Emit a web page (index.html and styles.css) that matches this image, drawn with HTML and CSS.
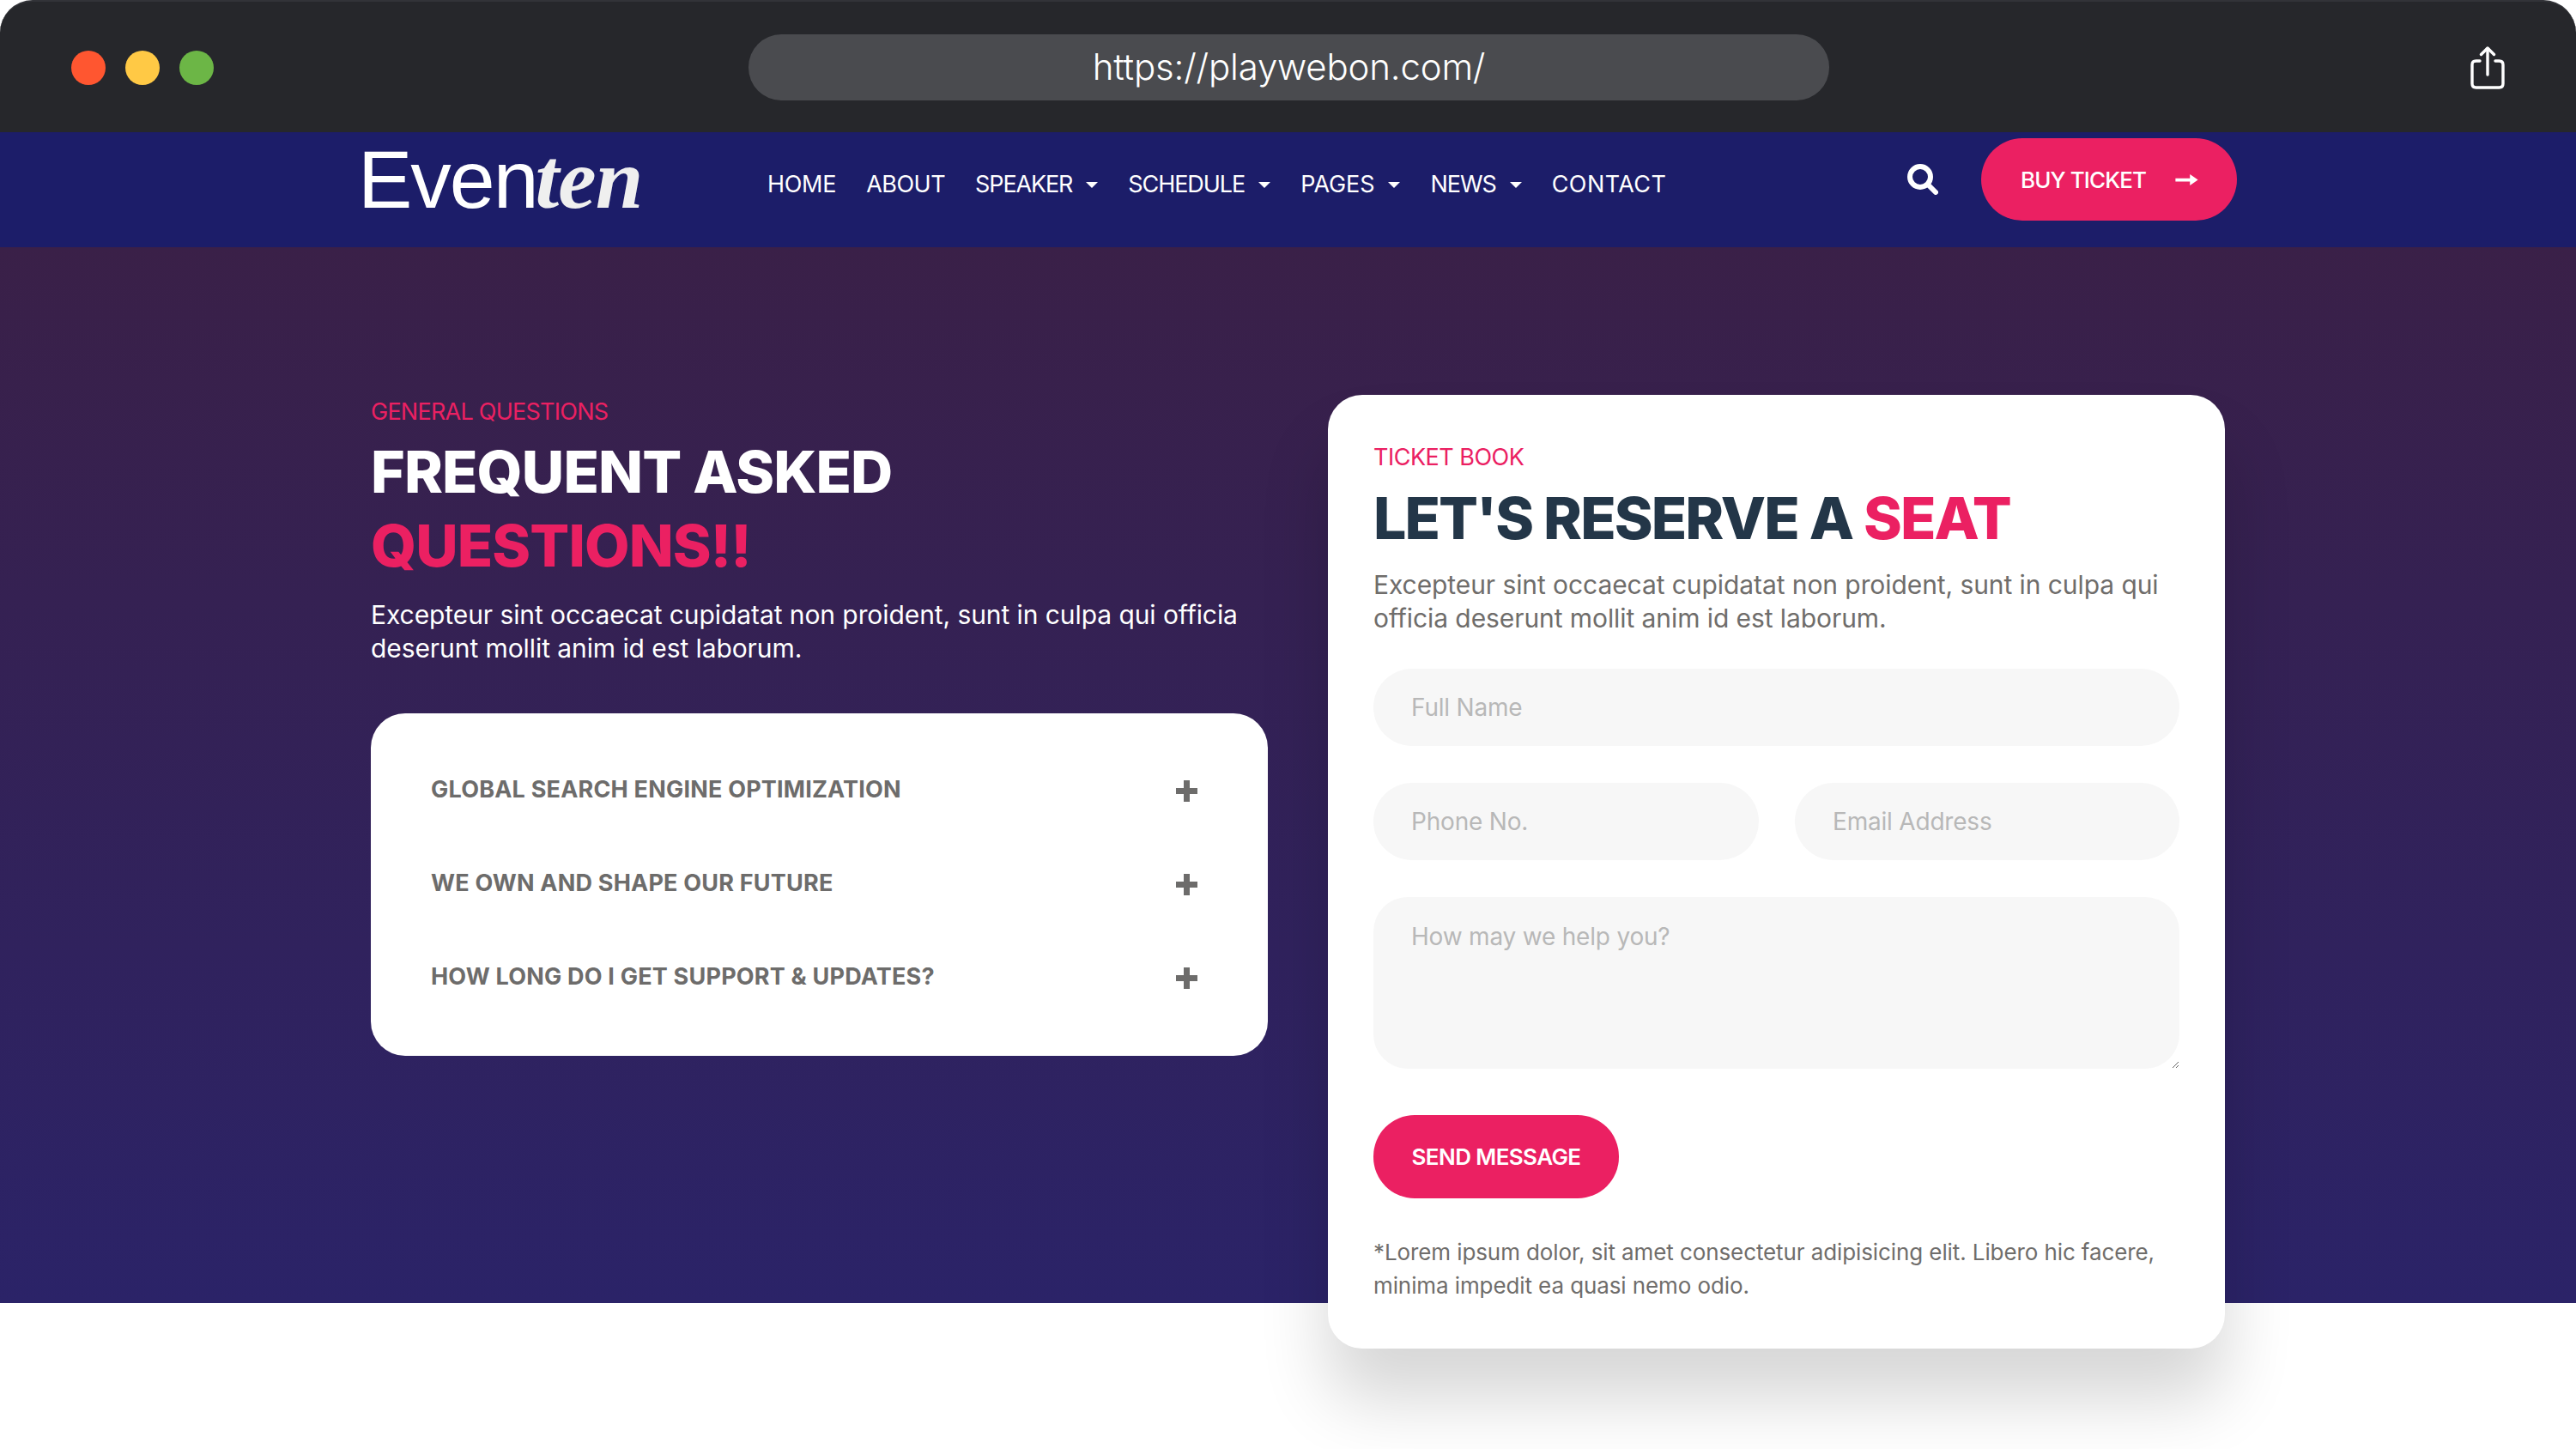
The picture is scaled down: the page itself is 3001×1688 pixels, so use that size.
FILE: index.html
```html
<!DOCTYPE html>
<html lang="en">
<head>
<meta charset="utf-8">
<title>Eventen</title>
<link rel="stylesheet" href="styles.css">
</head>
<body>
<header class="chrome">
  <div class="lights"><span class="light red"></span><span class="light yellow"></span><span class="light green"></span></div>
  <div class="url">https://playwebon.com/</div>
  <svg class="share" viewBox="0 0 40 50" fill="none" stroke="#fff" stroke-width="3.4" stroke-linecap="round" stroke-linejoin="round"><path d="M11 17H6.500Q2 17 2 21.500V43.500Q2 48 6.500 48H33.500Q38 48 38 43.500V21.500Q38 17 33.500 17H29"/><path d="M20 33V2.500"/><path d="M12.500 9.500L20 2L27.500 9.500"/></svg>
</header>
<nav class="nav">
  <a class="logo"><span class="logo-a">Even</span><span class="logo-b">ten</span></a>
  <ul class="menu">
    <li class="item">HOME</li>
    <li class="item about">ABOUT</li>
    <li class="item drop speaker">SPEAKER</li>
    <li class="item drop schedule">SCHEDULE</li>
    <li class="item drop pages">PAGES</li>
    <li class="item drop news">NEWS</li>
    <li class="item contact">CONTACT</li>
  </ul>
  <div class="nav-right">
    <svg class="search" viewBox="0 0 36 36" fill="none" stroke="#fff" stroke-width="6" stroke-linecap="round"><circle cx="15" cy="15" r="12"/><path d="M24 24L33 33"/></svg>
    <a class="buy"><span>BUY TICKET</span><svg class="arrow" viewBox="0 0 28 16" fill="#fff"><path d="M0 6H18V1L28 8L18 15V10H0Z"/></svg></a>
  </div>
</nav>
<main class="hero">
  <section class="faq">
    <p class="eyebrow eyebrow-left">GENERAL QUESTIONS</p>
    <h2 class="title title-light">FREQUENT ASKED<br><em>QUESTIONS!!</em></h2>
    <p class="lead lead-light">Excepteur sint occaecat cupidatat non proident, sunt in culpa qui officia deserunt mollit anim id est laborum.</p>
    <div class="faq-card">
      <div class="faq-row"><span>GLOBAL SEARCH ENGINE OPTIMIZATION</span><i class="plus"></i></div>
      <div class="faq-row"><span>WE OWN AND SHAPE OUR FUTURE</span><i class="plus"></i></div>
      <div class="faq-row"><span>HOW LONG DO I GET SUPPORT &amp; UPDATES?</span><i class="plus"></i></div>
    </div>
  </section>
  <section class="ticket">
    <p class="eyebrow">TICKET BOOK</p>
    <h2 class="title title-dark">LET'S RESERVE A <em>SEAT</em></h2>
    <p class="lead lead-dark">Excepteur sint occaecat cupidatat non proident, sunt in culpa qui officia deserunt mollit anim id est laborum.</p>
    <form class="form">
      <input class="field full" placeholder="Full Name">
      <input class="field" placeholder="Phone No.">
      <input class="field" placeholder="Email Address">
      <textarea class="field area full" placeholder="How may we help you?"></textarea>
    </form>
    <button class="send" type="button">SEND MESSAGE</button>
    <p class="note">*Lorem ipsum dolor, sit amet consectetur adipisicing elit. Libero hic facere, minima impedit ea quasi nemo odio.</p>
  </section>
</main>
</body>
</html>
```
FILE: styles.css
```css
* { box-sizing: border-box; }
html, body { margin: 0; padding: 0; }
body { width: 3001px; height: 1688px; overflow: hidden; background: #fff; font-family: Inter, "Liberation Sans", sans-serif; }
p, h2, ul { margin: 0; padding: 0; }

.chrome { height: 154px; background: #26272b; border-radius: 38px 38px 0 0; border-top: 2px solid #323338; display: flex; align-items: flex-start; padding: 38px 83px 0; position: relative; }
.lights { display: flex; gap: 23px; margin-top: 19px; width: 789px; }
.light { width: 40px; height: 40px; border-radius: 50%; }
.red { background: #ff5630; }
.yellow { background: #ffc945; }
.green { background: #6cb646; }
.url { width: 1259px; height: 77px; background: #4a4b4f; border-radius: 38px; color: #fff; font-weight: 300; font-size: 42px; line-height: 76px; text-align: center; letter-spacing: -.2px; }
.share { width: 40px; height: 50px; margin: 14px 0 0 747px; }

.nav { height: 134px; background: #1c1d69; display: flex; align-items: flex-start; padding-left: 417px; }
.logo { width: 477px; height: 80px; margin-top: 15px; color: #fff; line-height: 80px; white-space: nowrap; }
.logo-a { font-family: "Liberation Sans", sans-serif; font-size: 95px; letter-spacing: -2px; }
.logo-b { font-family: "Liberation Serif", serif; font-style: italic; font-weight: 700; font-size: 100px; color: #efefef; margin-left: -2px; letter-spacing: -1px; }
.menu { list-style: none; display: flex; gap: 35px; margin-top: 44px; color: #fff; font-size: 27px; line-height: 34px; letter-spacing: -.3px; }
.item { white-space: nowrap; }
.about { letter-spacing: -.5px; }
.speaker { letter-spacing: -1.15px; }
.schedule { letter-spacing: -1.05px; }
.pages { letter-spacing: -.1px; }
.news { letter-spacing: -1.05px; }
.contact { letter-spacing: .4px; }
.drop::after { content: ""; display: inline-block; width: 0; height: 0; border-left: 7px solid transparent; border-right: 7px solid transparent; border-top: 7px solid #fff; margin-left: 16px; vertical-align: 5px; }
.nav-right { margin-left: auto; margin-right: 395px; display: flex; align-items: flex-start; gap: 50px; padding-top: 7px; }
.search { width: 36px; height: 36px; margin-top: 30px; }
.buy { width: 298px; height: 96px; border-radius: 48px; background: #eb2062; color: #fff; display: flex; align-items: center; padding-left: 46px; gap: 34px; font-size: 26px; font-weight: 500; letter-spacing: -.9px; }
.arrow { width: 27px; height: 15px; }

.hero { height: 1230px; background: linear-gradient(180deg, #3a2048 0%, #2b2368 100%); display: grid; grid-template-columns: 1045px 1045px; column-gap: 70px; align-items: start; padding: 172px 0 0 432px; }
.eyebrow { color: #eb2062; font-size: 27px; font-weight: 400; line-height: 34px; letter-spacing: -.5px; }
.eyebrow-left { letter-spacing: -.75px; }
.title { font-size: 68px; font-weight: 800; line-height: 86px; letter-spacing: -.9px; }
.title em { font-style: normal; color: #eb2062; }
.title-light { color: #fff; margin-top: 9px; }
.title-dark { color: #233648; margin-top: 10px; letter-spacing: -1.95px; }
.lead { font-size: 30px; line-height: 39px; letter-spacing: -.08px; }
.lead-light { color: #fff; margin-top: 19px; width: 1030px; }
.lead-dark { color: #6f6d6b; margin-top: 16px; }

.faq { padding-top: 3px; }
.faq-card { margin-top: 56px; height: 399px; background: #fff; border-radius: 40px; padding: 72px 70px 0; }
.faq-row { height: 109px; display: flex; justify-content: space-between; color: #6d6c6b; font-size: 27px; font-weight: 700; line-height: 34px; letter-spacing: .2px; }
.plus { width: 25px; height: 25px; margin: 6px 12px 0 0; background: linear-gradient(#6d6c6b, #6d6c6b) center / 100% 7px no-repeat, linear-gradient(#6d6c6b, #6d6c6b) center / 7px 100% no-repeat; border-radius: 2px; }

.ticket { height: 1111px; background: #fff; border-radius: 40px; padding: 56px 53px 0; box-shadow: 0 60px 80px rgba(0, 0, 0, .16); }
.form { display: grid; grid-template-columns: 449px 448px; gap: 43px 42px; margin-top: 39px; }
.field { display: block; width: 100%; height: 90px; border: 0; outline: 0; background: #f7f7f7; border-radius: 45px; padding: 0 44px; margin: 0; font: 400 28px Inter, sans-serif; letter-spacing: -.2px; color: #333; }
.field::placeholder { color: #b8b8b8; opacity: 1; }
.full { grid-column: 1 / -1; }
.area { height: 200px; border-radius: 40px; padding: 29px 44px; line-height: 34px; }
.send { display: block; width: 286px; height: 97px; margin-top: 54px; border: 0; border-radius: 48px; background: #eb2062; color: #fff; font: 600 26px Inter, sans-serif; letter-spacing: -.6px; padding: 0; }
.note { margin-top: 43px; color: #6f6d6b; font-size: 26px; line-height: 39px; letter-spacing: -.1px; }
```
